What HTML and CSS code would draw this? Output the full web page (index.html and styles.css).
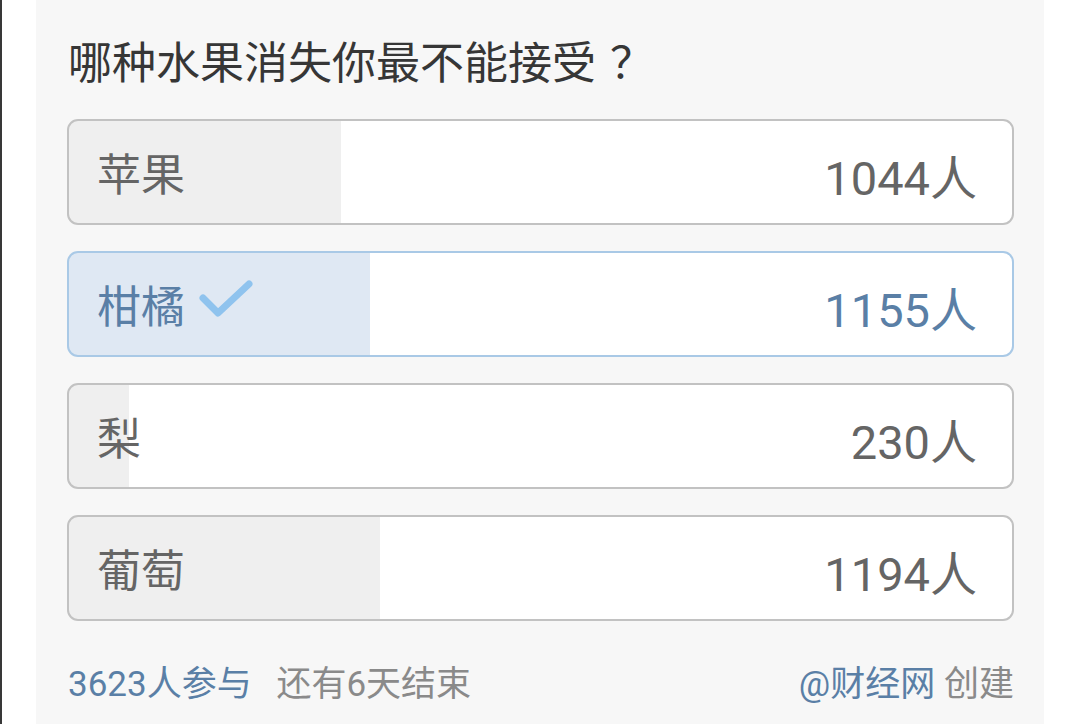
FILE: index.html
```html
<!DOCTYPE html>
<html lang="zh-CN">

<head>
  <meta charset="utf-8">
  <meta name="viewport" content="width=device-width, initial-scale=1">
  <title>投票</title>
  <link rel="stylesheet" href="styles.css">
</head>

<body>
  <div class="page">
    <div class="vote">
      <div class="voteTitle">哪种水果消失你最不能接受<span class="questionMark">？</span></div>

      <div class="voteOptions">
        <div class="option" style="--pct: 28.816%">
          <span class="optionLabel">苹果</span>
          <span class="optionCount">1044人</span>
        </div>
        <div class="option selected" style="--pct: 31.880%">
          <span class="optionLabel">柑橘
            <svg class="check" width="58" height="44" viewBox="0 0 58 44">
              <path d="M6 19 L21 34 L52 5" fill="none" stroke="#8fc3ee" stroke-width="7" stroke-linecap="round" stroke-linejoin="round" />
            </svg>
          </span>
          <span class="optionCount">1155人</span>
        </div>
        <div class="option" style="--pct: 6.348%">
          <span class="optionLabel">梨</span>
          <span class="optionCount">230人</span>
        </div>
        <div class="option" style="--pct: 32.956%">
          <span class="optionLabel">葡萄</span>
          <span class="optionCount">1194人</span>
        </div>
      </div>

      <div class="voteFooter">
        <div class="footerLeft">
          <span class="blueText">3623人参与</span>
          <span class="grayText">还有6天结束</span>
        </div>
        <div class="footerRight">
          <span class="blueText">@财经网</span>
          <span class="grayText">创建</span>
        </div>
      </div>
    </div>
  </div>
</body>

</html>
```

FILE: styles.css
```css
:root {
  --card-bg: #f7f7f7;
  --option-border: #c2c2c2;
  --option-fill: #efefef;
  --selected-border: #a9c9e6;
  --selected-fill: #dfe8f3;
  --blue-text: #5a7fa6;
  --gray-text: #656565;
  --light-gray-text: #8a8a8a;
}

* {
  padding: 0;
  margin: 0;
  box-sizing: border-box;
}

html,
body {
  height: 100%;
  width: 100%;
  background: #fff;
  font-family: "Roboto", "Noto Sans CJK SC", sans-serif;
}

.page {
  height: 100%;
  border-left: 2px solid #383838;
  padding-left: 34px;
}

.vote {
  width: 1008px;
  height: 100%;
  background: var(--card-bg);
  padding: 30px 30px 0 31px;
}

.voteTitle {
  font-family: "Noto Sans CJK SC", sans-serif;
  font-size: 44px;
  line-height: 60px;
  color: #363636;
  padding-left: 1px;
}

/* the phone centres the full-width question mark */
.questionMark {
  margin-left: 14px;
}

.voteOptions {
  margin-top: 29px;
  display: flex;
  flex-direction: column;
  gap: 26px;
}

.option {
  height: 106px;
  border: 2px solid var(--option-border);
  border-radius: 11px;
  background: linear-gradient(to right, var(--option-fill) var(--pct), #fff var(--pct));
  display: flex;
  align-items: center;
  justify-content: space-between;
  padding: 0 35px 0 28px;
  color: var(--gray-text);
}

.option.selected {
  border-color: var(--selected-border);
  background: linear-gradient(to right, var(--selected-fill) var(--pct), #fff var(--pct));
  color: var(--blue-text);
}

.optionLabel {
  font-size: 44px;
  display: flex;
  align-items: center;
}

.check {
  margin-left: 12px;
  margin-top: -6px;
}

.optionCount {
  font-size: 47px;
  margin-top: 4px;
}

.voteFooter {
  margin-top: 39px;
  display: flex;
  justify-content: space-between;
  align-items: center;
  font-size: 35px;
  line-height: 50px;
  padding-left: 1px;
}

.footerLeft .grayText {
  margin-left: 16px;
}

.blueText {
  color: var(--blue-text);
}

.grayText {
  color: var(--light-gray-text);
}
```
